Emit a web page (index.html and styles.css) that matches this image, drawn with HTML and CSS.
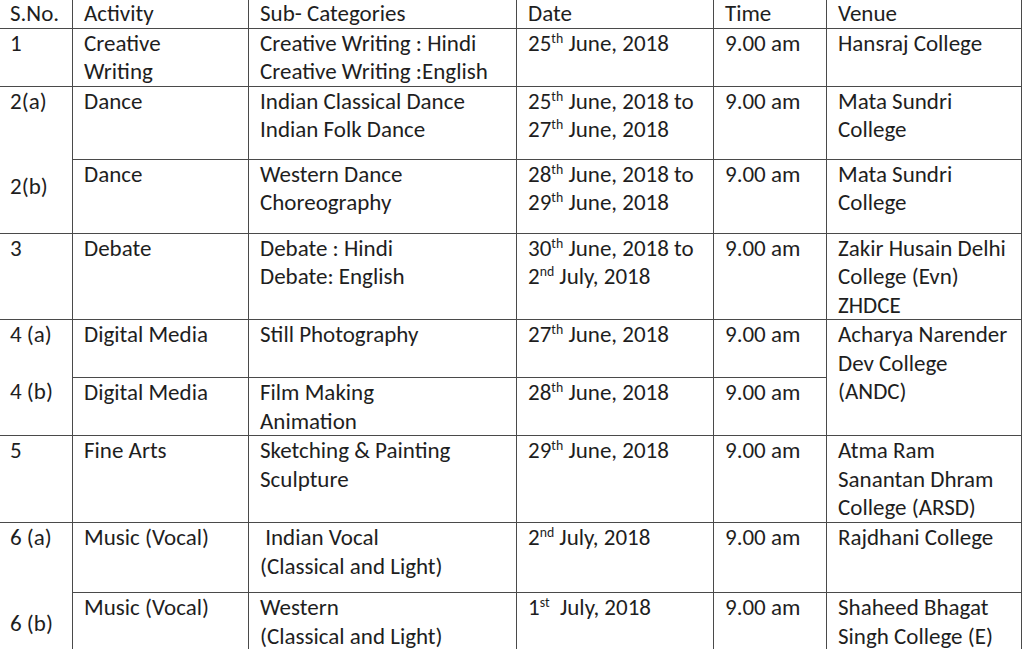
FILE: index.html
```html
<!DOCTYPE html>
<html>
<head>
<meta charset="utf-8">
<link rel="stylesheet" href="styles.css">
</head>
<body>
<table class="sched">
  <colgroup>
    <col class="c-sno"><col class="c-act"><col class="c-sub"><col class="c-date"><col class="c-time"><col class="c-venue">
  </colgroup>
  <tr class="r-head">
    <td>S.No.</td><td>Activity</td><td>Sub- Categories</td><td>Date</td><td>Time</td><td>Venue</td>
  </tr>
  <tr class="r-1">
    <td>1</td>
    <td>Creative<br>Writing</td>
    <td>Creative Writing : Hindi<br>Creative Writing :English</td>
    <td>25<sup>th</sup> June, 2018</td>
    <td>9.00 am</td>
    <td>Hansraj College</td>
  </tr>
  <tr class="r-2a">
    <td rowspan="2">2(a)<br><br><br>2(b)</td>
    <td>Dance</td>
    <td>Indian Classical Dance<br>Indian Folk Dance</td>
    <td>25<sup>th</sup> June, 2018 to<br>27<sup>th</sup> June, 2018</td>
    <td>9.00 am</td>
    <td>Mata Sundri<br>College</td>
  </tr>
  <tr class="r-2b">
    <td>Dance</td>
    <td>Western Dance<br>Choreography</td>
    <td>28<sup>th</sup> June, 2018 to<br>29<sup>th</sup> June, 2018</td>
    <td>9.00 am</td>
    <td>Mata Sundri<br>College</td>
  </tr>
  <tr class="r-3">
    <td>3</td>
    <td>Debate</td>
    <td>Debate : Hindi<br>Debate: English</td>
    <td>30<sup>th</sup> June, 2018 to<br>2<sup>nd</sup> July, 2018</td>
    <td>9.00 am</td>
    <td>Zakir Husain Delhi<br>College (Evn)<br>ZHDCE</td>
  </tr>
  <tr class="r-4a">
    <td rowspan="2">4 (a)<br><br>4 (b)</td>
    <td>Digital Media</td>
    <td>Still Photography</td>
    <td>27<sup>th</sup> June, 2018</td>
    <td>9.00 am</td>
    <td rowspan="2">Acharya Narender<br>Dev College<br>(ANDC)</td>
  </tr>
  <tr class="r-4b">
    <td>Digital Media</td>
    <td>Film Making<br>Animation</td>
    <td>28<sup>th</sup> June, 2018</td>
    <td>9.00 am</td>
  </tr>
  <tr class="r-5">
    <td>5</td>
    <td>Fine Arts</td>
    <td>Sketching &amp; Painting<br>Sculpture</td>
    <td>29<sup>th</sup> June, 2018</td>
    <td>9.00 am</td>
    <td>Atma Ram<br>Sanantan Dhram<br>College (ARSD)</td>
  </tr>
  <tr class="r-6a">
    <td rowspan="2">6 (a)<br><br><br>6 (b)</td>
    <td>Music (Vocal)</td>
    <td>&nbsp;Indian Vocal<br>(Classical and Light)</td>
    <td>2<sup>nd</sup> July, 2018</td>
    <td>9.00 am</td>
    <td>Rajdhani College</td>
  </tr>
  <tr class="r-6b">
    <td>Music (Vocal)</td>
    <td>Western<br>(Classical and Light)</td>
    <td>1<sup>st</sup>&nbsp; July, 2018</td>
    <td>9.00 am</td>
    <td>Shaheed Bhagat<br>Singh College (E)</td>
  </tr>
</table>
</body>
</html>
```
FILE: styles.css
```css
html, body {
  margin: 0;
  padding: 0;
  background: #ffffff;
  overflow: hidden;
}

.sched {
  border-collapse: collapse;
  table-layout: fixed;
  width: 1023px;
  margin-left: -2px;
  margin-top: -2px;
  font-family: "Carlito", "Lato", "Liberation Sans", sans-serif;
  font-size: 23px;
  line-height: 28.5px;
  color: #1e1e1e;
}

.c-sno { width: 74px; }
.c-act { width: 176px; }
.c-sub { width: 268px; }
.c-date { width: 197px; }
.c-time { width: 113px; }
.c-venue { width: 195px; }

.sched td {
  border: 1px solid #4a4a4a;
  padding: 0 0 0 11px;
  vertical-align: top;
  white-space: nowrap;
  overflow: hidden;
}

.sched sup {
  font-size: 0.6em;
  line-height: 0;
  vertical-align: 0.6em;
}

.r-head { height: 28px; }
.r-1 { height: 57px; }
.r-2a { height: 73px; }
.r-2b { height: 74px; }
.r-3 { height: 86px; }
.r-4a { height: 58px; }
.r-4b { height: 58px; }
.r-5 { height: 87px; }
.r-6a { height: 70px; }
.r-6b { height: 80px; }
```
